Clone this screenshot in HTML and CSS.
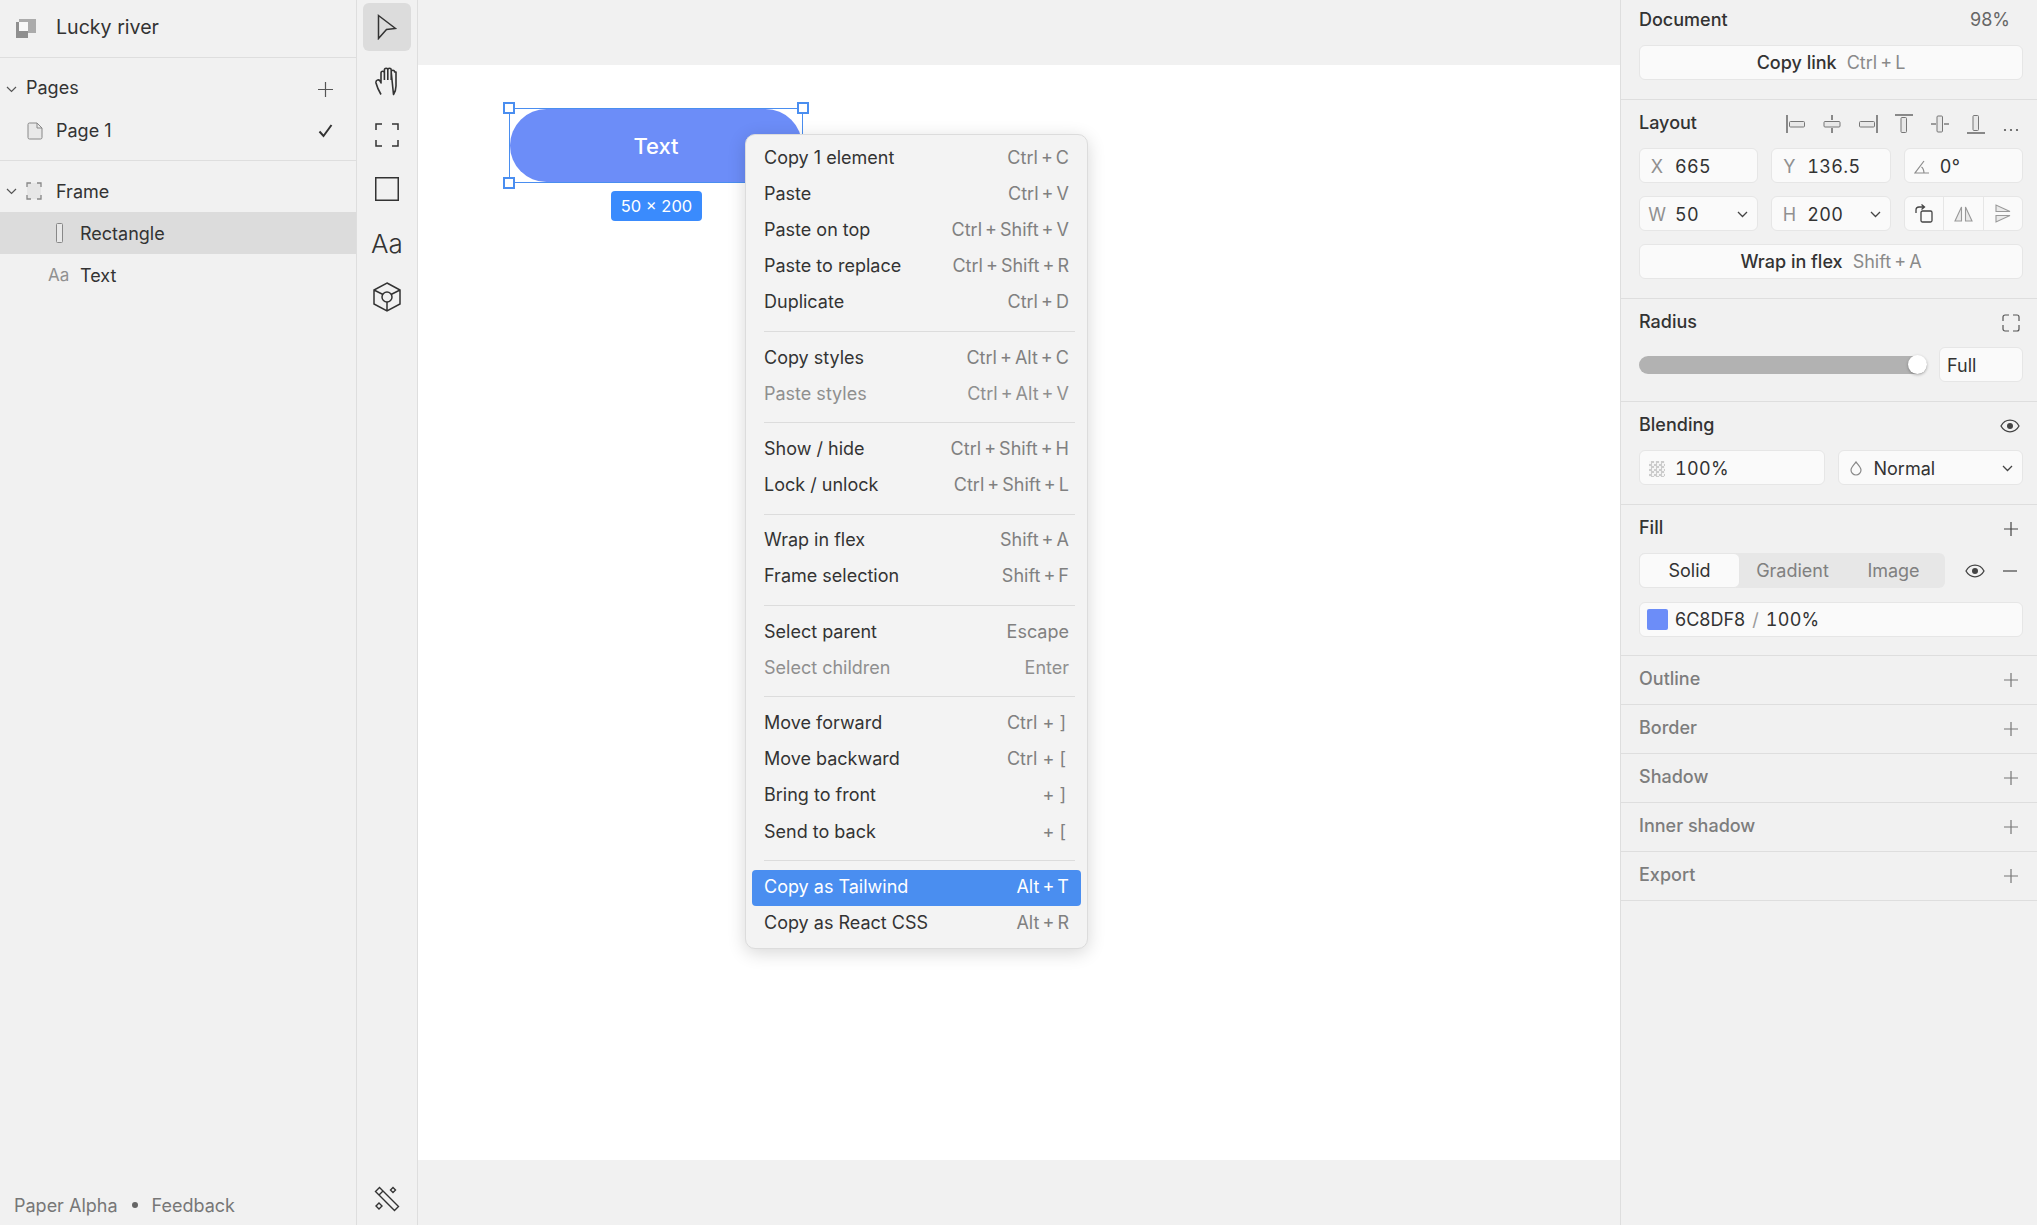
FILE: index.html
```html
<!DOCTYPE html>
<html lang="en">
<head>
<meta charset="UTF-8" />
<title>Paper - Lucky river</title>
<link rel="stylesheet" href="styles.css">
</head>
<body>
<div class="app">

  <!-- Left panel -->
  <aside class="left">
    <div class="doc-head">
      <svg class="doc-logo" width="20" height="20" viewBox="0 0 20 20"><rect x="0" y="3" width="12" height="16" fill="#8f8f8f"/><rect x="3" y="0" width="17" height="14" fill="#ababab"/><rect x="0" y="12" width="12" height="7" fill="#8f8f8f"/><rect x="3" y="3" width="9" height="9" fill="#f8f8f8"/></svg>
      <span>Lucky river</span>
    </div>
    <div class="tree-group">
      <div class="tree-row head">
        <svg class="chev" width="11" height="7" viewBox="0 0 11 7"><path d="M1 1l4.500 4.500L10 1" fill="none" stroke="#555" stroke-width="1.200"/></svg>
        <span class="grow">Pages</span>
        <svg width="15" height="15" viewBox="0 0 15 15"><path d="M7.500 0v15M0 7.500h15" stroke="#555" stroke-width="1.200"/></svg>
      </div>
      <div class="tree-row page">
        <svg width="16" height="18" viewBox="0 0 16 18"><path d="M1 2.500a1.500 1.500 0 0 1 1.500-1.500h7.500l5 5v9.500a1.500 1.500 0 0 1-1.500 1.500h-11a1.500 1.500 0 0 1-1.500-1.500z" fill="#e8e8e8" stroke="#888" stroke-width="1"/><path d="M10 1v5h5" fill="none" stroke="#888"/></svg>
        <span class="grow">Page 1</span>
        <svg width="15" height="14" viewBox="0 0 15 14"><path d="M1.500 7.500l4 4.500 8-11" fill="none" stroke="#333" stroke-width="2"/></svg>
      </div>
    </div>
    <div class="tree-layers">
      <div class="tree-row head">
        <svg class="chev" width="11" height="7" viewBox="0 0 11 7"><path d="M1 1l4.500 4.500L10 1" fill="none" stroke="#555" stroke-width="1.200"/></svg>
        <svg class="frame-ic" width="16" height="18" viewBox="0 0 16 18"><rect x="1" y="1" width="14" height="16" fill="#e6e6e6"/><path d="M1 5V1h4M11 1h4v4M15 13v4h-4M5 17H1v-4" fill="none" stroke="#888" stroke-width="1.300"/></svg>
        <span class="grow">Frame</span>
      </div>
      <div class="tree-row layer selected">
        <svg width="7" height="20" viewBox="0 0 7 20"><rect x=".5" y=".5" width="6" height="19" rx="1" fill="#e8e8e8" stroke="#888"/></svg>
        <span>Rectangle</span>
      </div>
      <div class="tree-row layer">
        <span class="aa">Aa</span>
        <span>Text</span>
      </div>
    </div>
    <div class="left-foot">
      <span>Paper Alpha</span>
      <i class="dot"></i>
      <span>Feedback</span>
    </div>
  </aside>

  <!-- Tools -->
  <nav class="tools">
    <div class="tool active"><svg width="20" height="26" viewBox="0 0 20 26"><path d="M1.500 1.500L18.500 14.500 9.500 15.500 1.500 24.500z" fill="none" stroke="#333" stroke-width="1.500"/></svg></div>
    <div class="tool"><svg width="24" height="29" viewBox="0 0 24 29"><path d="M6 27.500C4 24 2 20 1 16c-.5-3 2.500-4 4-2l1 2V6a1.700 1.700 0 0 1 3.400 0M9.400 13V3a1.700 1.700 0 0 1 3.400 0v10M12.800 3a1.700 1.700 0 0 1 3.400 0v10M16.200 5a1.700 1.700 0 0 1 3.400 0l1.400 0v14c0 3-1 6-2.500 8.500z" fill="none" stroke="#333" stroke-width="1.600" stroke-linejoin="round"/></svg></div>
    <div class="tool"><svg width="24" height="24" viewBox="0 0 24 24"><path d="M1 7V1h6M17 1h6v6M23 17v6h-6M7 23H1v-6" fill="none" stroke="#333" stroke-width="1.500"/></svg></div>
    <div class="tool"><svg width="24" height="24" viewBox="0 0 24 24"><rect x=".75" y=".75" width="22.500" height="22.500" fill="none" stroke="#333" stroke-width="1.500"/></svg></div>
    <div class="tool tool-aa">Aa</div>
    <div class="tool"><svg width="28" height="30" viewBox="0 0 28 30"><path d="M14 1L27 8v14l-13 7-13-7V8zM1 8l9 4.500M27 8l-9 4.500M14 20v9" fill="none" stroke="#333" stroke-width="1.500"/><circle cx="14" cy="15" r="5" fill="none" stroke="#333" stroke-width="1.500"/></svg></div>
    <div class="tool tool-bottom"><svg width="26" height="26" viewBox="0 0 26 26"><path d="M1.500 5.500L5.500 1.500 24.500 20.500 20.500 24.500zM5 9l4-4" fill="none" stroke="#333" stroke-width="1.400"/><path d="M19 1.500l2.500 2.500L19 6.500 16.500 4zM5 17l3 3-3 3-3-3z" fill="none" stroke="#333" stroke-width="1.400"/></svg></div>
  </nav>

  <!-- Canvas -->
  <main class="canvas">
    <div class="frame"></div>
    <div class="selection">
      <div class="shape">Text</div>
      <i class="handle tl"></i>
      <i class="handle tr"></i>
      <i class="handle bl"></i>
    </div>
    <div class="size-badge">50 × 200</div>

    <div class="menu">
      <div class="item"><span>Copy 1 element</span><kbd>Ctrl + C</kbd></div>
      <div class="item"><span>Paste</span><kbd>Ctrl + V</kbd></div>
      <div class="item"><span>Paste on top</span><kbd>Ctrl + Shift + V</kbd></div>
      <div class="item"><span>Paste to replace</span><kbd>Ctrl + Shift + R</kbd></div>
      <div class="item"><span>Duplicate</span><kbd>Ctrl + D</kbd></div>
      <hr>
      <div class="item"><span>Copy styles</span><kbd>Ctrl + Alt + C</kbd></div>
      <div class="item off"><span>Paste styles</span><kbd>Ctrl + Alt + V</kbd></div>
      <hr>
      <div class="item"><span>Show / hide</span><kbd>Ctrl + Shift + H</kbd></div>
      <div class="item"><span>Lock / unlock</span><kbd>Ctrl + Shift + L</kbd></div>
      <hr>
      <div class="item"><span>Wrap in flex</span><kbd>Shift + A</kbd></div>
      <div class="item"><span>Frame selection</span><kbd>Shift + F</kbd></div>
      <hr>
      <div class="item"><span>Select parent</span><kbd>Escape</kbd></div>
      <div class="item off"><span>Select children</span><kbd>Enter</kbd></div>
      <hr>
      <div class="item"><span>Move forward</span><kbd class="br">Ctrl + ]</kbd></div>
      <div class="item"><span>Move backward</span><kbd class="br">Ctrl + [</kbd></div>
      <div class="item"><span>Bring to front</span><kbd class="br">+ ]</kbd></div>
      <div class="item"><span>Send to back</span><kbd class="br">+ [</kbd></div>
      <hr>
      <div class="item active"><span>Copy as Tailwind</span><kbd>Alt + T</kbd></div>
      <div class="item"><span>Copy as React CSS</span><kbd>Alt + R</kbd></div>
    </div>
  </main>

  <!-- Right panel -->
  <aside class="right">
    <section class="section first">
      <div class="sec-title"><span>Document</span><span class="zoom">98%</span></div>
      <div class="btn"><b>Copy link</b><em>Ctrl + L</em></div>
    </section>

    <section class="section">
      <div class="sec-title">
        <span>Layout</span>
        <div class="aligns">
          <svg width="20" height="20" viewBox="0 0 20 20"><path d="M1 1v18" stroke="#444" stroke-width="1.200"/><rect x="3.500" y="7.500" width="15" height="5.500" rx="1" fill="#e8e8e8" stroke="#777"/></svg>
          <svg width="20" height="20" viewBox="0 0 20 20"><path d="M10 1v5M10 14v5" stroke="#444" stroke-width="1.200"/><rect x="2" y="7.500" width="16" height="5.500" rx="1" fill="#e8e8e8" stroke="#777"/></svg>
          <svg width="20" height="20" viewBox="0 0 20 20"><path d="M19 1v18" stroke="#444" stroke-width="1.200"/><rect x="1.500" y="7.500" width="15" height="5.500" rx="1" fill="#e8e8e8" stroke="#777"/></svg>
          <svg width="20" height="20" viewBox="0 0 20 20"><path d="M1 1h18" stroke="#444" stroke-width="1.200"/><rect x="7" y="3.500" width="5.500" height="15" rx="1" fill="#e8e8e8" stroke="#777"/></svg>
          <svg width="20" height="20" viewBox="0 0 20 20"><path d="M1 10h5M14 10h5" stroke="#444" stroke-width="1.200"/><rect x="7" y="2" width="5.500" height="16" rx="1" fill="#e8e8e8" stroke="#777"/></svg>
          <svg width="20" height="20" viewBox="0 0 20 20"><path d="M1 19h18" stroke="#444" stroke-width="1.200"/><rect x="7" y="1.500" width="5.500" height="15" rx="1" fill="#e8e8e8" stroke="#777"/></svg>
          <svg class="more" width="18" height="20" viewBox="0 0 18 20"><circle cx="3" cy="16" r="1.100" fill="#555"/><circle cx="9" cy="16" r="1.100" fill="#555"/><circle cx="15" cy="16" r="1.100" fill="#555"/></svg>
        </div>
      </div>
      <div class="grid3">
        <div class="field"><label>X</label><span class="num">665</span></div>
        <div class="field"><label>Y</label><span class="num">136.5</span></div>
        <div class="field">
          <label class="ic"><svg width="16" height="14" viewBox="0 0 16 14"><path d="M10 1L1 13h14M7.500 7c1.500 1 2.300 3 2.500 6" fill="none" stroke="#8c8c8c" stroke-width="1.200"/></svg></label>
          <span class="num">0°</span>
        </div>
      </div>
      <div class="grid3">
        <div class="field"><label>W</label><span class="num grow">50</span><svg class="caret" width="11" height="7" viewBox="0 0 11 7"><path d="M1 1l4.500 4.500L10 1" fill="none" stroke="#444" stroke-width="1.300"/></svg></div>
        <div class="field"><label>H</label><span class="num grow">200</span><svg class="caret" width="11" height="7" viewBox="0 0 11 7"><path d="M1 1l4.500 4.500L10 1" fill="none" stroke="#444" stroke-width="1.300"/></svg></div>
        <div class="field triple">
          <div><svg width="20" height="20" viewBox="0 0 20 20"><rect x="7" y="7" width="11" height="11" rx="1.500" fill="none" stroke="#444" stroke-width="1.300"/><path d="M2 9V6a3 3 0 0 1 3-3h5M7.500 .5L10.500 3 7.500 5.500" fill="none" stroke="#444" stroke-width="1.300"/></svg></div>
          <div><svg width="19" height="18" viewBox="0 0 19 18"><path d="M7.500 2v14H1zM11.500 2v14H18z" fill="#eaeaea" stroke="#999" stroke-width="1.100"/></svg></div>
          <div><svg width="18" height="19" viewBox="0 0 18 19"><path d="M2 1v6.500h14zM2 18v-6.500h14z" fill="#eaeaea" stroke="#999" stroke-width="1.100"/></svg></div>
        </div>
      </div>
      <div class="btn"><b>Wrap in flex</b><em>Shift + A</em></div>
    </section>

    <section class="section">
      <div class="sec-title">
        <span>Radius</span>
        <svg class="end-ic" width="18" height="18" viewBox="0 0 18 18"><path d="M1 7V3a2 2 0 0 1 2-2h4M11 1h4a2 2 0 0 1 2 2v4M17 11v4a2 2 0 0 1-2 2h-4M7 17H3a2 2 0 0 1-2-2v-4" fill="none" stroke="#555" stroke-width="1.200"/></svg>
      </div>
      <div class="radius-row">
        <div class="slider"><i class="knob"></i></div>
        <div class="field full"><span>Full</span></div>
      </div>
    </section>

    <section class="section">
      <div class="sec-title">
        <span>Blending</span>
        <svg class="end-ic eye" width="20" height="14" viewBox="0 0 20 14"><path d="M1 7c2-3.700 5-5.800 9-5.800s7 2.100 9 5.800c-2 3.700-5 5.800-9 5.800S3 10.700 1 7z" fill="none" stroke="#444" stroke-width="1.300"/><circle cx="10" cy="7" r="3" fill="#444"/></svg>
      </div>
      <div class="grid2">
        <div class="field"><i class="checker"></i><span class="num">100%</span></div>
        <div class="field">
          <label class="ic"><svg width="12" height="15" viewBox="0 0 12 15"><path d="M6 1c2.500 3 5 5.300 5 8a5 5 0 0 1-10 0c0-2.700 2.500-5 5-8z" fill="none" stroke="#888" stroke-width="1.200"/></svg></label>
          <span class="grow">Normal</span>
          <svg class="caret" width="11" height="7" viewBox="0 0 11 7"><path d="M1 1l4.500 4.500L10 1" fill="none" stroke="#444" stroke-width="1.300"/></svg>
        </div>
      </div>
    </section>

    <section class="section fill">
      <div class="sec-title">
        <span>Fill</span>
        <svg class="end-ic plus" width="14" height="14" viewBox="0 0 14 14"><path d="M7 0v14M0 7h14" stroke="#444" stroke-width="1.200"/></svg>
      </div>
      <div class="fill-row">
        <div class="tabs">
          <div class="tab on">Solid</div>
          <div class="tab">Gradient</div>
          <div class="tab">Image</div>
        </div>
        <svg class="eye" width="20" height="14" viewBox="0 0 20 14"><path d="M1 7c2-3.700 5-5.800 9-5.800s7 2.100 9 5.800c-2 3.700-5 5.800-9 5.800S3 10.700 1 7z" fill="none" stroke="#444" stroke-width="1.300"/><circle cx="10" cy="7" r="3" fill="#444"/></svg>
        <svg class="minus" width="14" height="2" viewBox="0 0 14 2"><path d="M0 1h14" stroke="#444" stroke-width="1.200"/></svg>
      </div>
      <div class="field color"><i class="swatch"></i><span>6C8DF8</span><u>/</u><span class="num">100%</span></div>
    </section>

    <div class="collapsed"><span>Outline</span><svg width="14" height="14" viewBox="0 0 14 14"><path d="M7 0v14M0 7h14" stroke="#777" stroke-width="1.200"/></svg></div>
    <div class="collapsed"><span>Border</span><svg width="14" height="14" viewBox="0 0 14 14"><path d="M7 0v14M0 7h14" stroke="#777" stroke-width="1.200"/></svg></div>
    <div class="collapsed"><span>Shadow</span><svg width="14" height="14" viewBox="0 0 14 14"><path d="M7 0v14M0 7h14" stroke="#777" stroke-width="1.200"/></svg></div>
    <div class="collapsed"><span>Inner shadow</span><svg width="14" height="14" viewBox="0 0 14 14"><path d="M7 0v14M0 7h14" stroke="#777" stroke-width="1.200"/></svg></div>
    <div class="collapsed"><span>Export</span><svg width="14" height="14" viewBox="0 0 14 14"><path d="M7 0v14M0 7h14" stroke="#777" stroke-width="1.200"/></svg></div>
  </aside>
</div>
</body>
</html>
```

FILE: styles.css
```css
:root {
  --panel: #f1f1f1;
  --line: #dedede;
  --text: #333;
  --muted: #868686;
  --blue: #4a8ef0;
}
* {
  box-sizing: border-box;
}
html, body {
  margin: 0;
  height: 100%;
  overflow: hidden;
}
body {
  font-family: Inter, "Liberation Sans", sans-serif;
  font-size: 18px;
  color: var(--text);
  background: var(--panel);
}
svg {
  display: block;
  flex: none;
}
.grow {
  flex: 1;
}
.app {
  display: flex;
  height: 1225px;
}

/* left panel */
.left {
  width: 357px;
  border-right: 1px solid var(--line);
  display: flex;
  flex-direction: column;
}
.doc-head {
  height: 58px;
  padding: 0 0 0 16px;
  display: flex;
  align-items: center;
  gap: 20px;
  font-size: 19.600px;
  border-bottom: 1px solid var(--line);
}
.doc-head span {
  margin-top: -3px;
}
.tree-group {
  height: 103px;
  padding-top: 10px;
  border-bottom: 1px solid var(--line);
}
.tree-row {
  display: flex;
  align-items: center;
  height: 42px;
}
.tree-row > span {
  margin-top: -2px;
}
.tree-group .head > span {
  margin-top: -4px;
}
.tree-layers .tree-row > span {
  margin-top: 0;
}
.tree-row.head {
  padding: 0 23px 0 6px;
}
.tree-row.head .chev {
  margin-right: 9px;
}
.tree-row.page {
  padding: 0 23px 0 27px;
  gap: 13px;
}
.tree-layers {
  padding-top: 9px;
  flex: 1;
}
.frame-ic {
  margin-right: 14px;
}
.tree-row.layer {
  padding-left: 56px;
  gap: 17px;
}
.tree-row.selected {
  background: #dcdcdc;
}
.tree-layers .aa {
  width: 22px;
  margin-left: -8px;
  margin-right: -7px;
  color: #909090;
  font-size: 17px;
}
.left-foot {
  height: 40px;
  padding: 0 0 0 14px;
  display: flex;
  align-items: center;
  gap: 14px;
  color: #777;
}
.dot {
  width: 6px;
  height: 6px;
  border-radius: 50%;
  background: #666;
}

/* tools */
.tools {
  width: 61px;
  border-right: 1px solid var(--line);
  padding: 3px 5px 0;
  display: flex;
  flex-direction: column;
  align-items: center;
  gap: 6px;
}
.tool {
  width: 48px;
  height: 48px;
  flex: none;
  display: flex;
  align-items: center;
  justify-content: center;
  border-radius: 6px;
}
.tool.active {
  background: #dcdcdc;
}
.tool-aa {
  font-size: 26px;
  font-weight: 300;
}
.tool-bottom {
  margin-top: auto;
  margin-bottom: 2px;
}

/* canvas */
.canvas {
  flex: 1;
  position: relative;
  padding-top: 65px;
}
.frame {
  height: 1095px;
  background: #fff;
}
.selection {
  position: absolute;
  left: 91px;
  top: 108px;
  width: 294px;
  height: 75px;
  border: 1.500px solid var(--blue);
}
.shape {
  height: 100%;
  border-radius: 37px;
  background: #6c8df8;
  color: #fff;
  font-size: 22px;
  font-weight: 500;
  display: flex;
  align-items: center;
  justify-content: center;
}
.handle {
  position: absolute;
  width: 12px;
  height: 12px;
  background: #fff;
  border: 2px solid var(--blue);
}
.tl { left: -7px; top: -7px; }
.tr { right: -7px; top: -7px; }
.bl { left: -7px; bottom: -7px; }
.size-badge {
  position: absolute;
  left: 193px;
  top: 191px;
  width: 91px;
  height: 30px;
  border-radius: 4px;
  background: #3a8bfd;
  color: #fff;
  font-size: 16.500px;
  display: flex;
  align-items: center;
  justify-content: center;
}

/* context menu */
.menu {
  position: absolute;
  left: 327px;
  top: 134px;
  width: 343px;
  height: 815px;
  padding: 6px 6px;
  background: #f3f3f3;
  border: 1px solid #dcdcdc;
  border-radius: 10px;
  box-shadow: 0 4px 18px rgba(0,0,0,0.16);
}
.item {
  height: 36.200px;
  padding: 0 12px 4px 12px;
  display: flex;
  justify-content: space-between;
  align-items: center;
  border-radius: 4px;
}
.item kbd {
  font: inherit;
  color: #808080;
  word-spacing: -2px;
}
.item kbd.br {
  word-spacing: 0;
  margin-right: 3px;
}
.item.off, .item.off kbd {
  color: #8f8f8f;
}
.item.active {
  background: var(--blue);
  color: #fff;
}
.item.active kbd {
  color: #fff;
}
.menu hr {
  margin: 9px 6px 9px 12px;
  height: 1px;
  border: 0;
  background: #dcdcdc;
}

/* right panel */
.right {
  width: 417px;
  border-left: 1px solid var(--line);
  flex: none;
}
.section {
  padding: 13px 14px 19px 18px;
  border-bottom: 1px solid var(--line);
}
.section.first {
  padding-top: 9px;
}
.section.fill {
  padding-bottom: 18px;
}
.sec-title {
  height: 22px;
  margin-bottom: 13px;
  display: flex;
  justify-content: space-between;
  align-items: center;
  font-weight: 500;
}
.sec-title > span {
  margin-top: -3px;
}
.section.first .sec-title {
  margin-bottom: 14px;
}
.section.first .sec-title > span {
  margin-top: -1px;
}
.zoom {
  font-weight: 400;
  color: #666;
  margin-right: 13px;
}
.btn {
  height: 35px;
  border: 1px solid #e6e6e6;
  border-radius: 6px;
  background: #fafafa;
  display: flex;
  align-items: center;
  justify-content: center;
  gap: 10px;
}
.btn b {
  font-weight: 500;
}
.btn em {
  font-style: normal;
  color: #8a8a8a;
  word-spacing: -2px;
}
.aligns {
  display: flex;
  align-items: center;
  gap: 16px;
  margin-right: 4px;
}
.aligns .more {
  margin-right: -1px;
}
.grid3 {
  display: grid;
  grid-template-columns: repeat(3, 1fr);
  gap: 13px;
  margin-bottom: 13px;
}
.grid2 {
  display: grid;
  grid-template-columns: 1fr 1fr;
  gap: 13px;
}
.field {
  height: 35px;
  border: 1px solid #e6e6e6;
  border-radius: 6px;
  background: #fafafa;
  display: flex;
  align-items: center;
  padding: 2px 9px 0 7px;
}
.field label {
  width: 20px;
  flex: none;
  color: #909090;
  margin-right: 8px;
  display: flex;
  justify-content: center;
}
.num {
  font-variant-numeric: tabular-nums;
  letter-spacing: .3px;
}
.caret {
  margin-left: 4px;
}
.triple {
  padding: 0;
}
.triple div {
  flex: 1;
  height: 100%;
  display: flex;
  align-items: center;
  justify-content: center;
  border-left: 1px solid #e6e6e6;
}
.triple div:first-child {
  border-left: 0;
}
.end-ic {
  margin-right: 3px;
}
.end-ic.eye {
  margin-right: 3px;
}
.end-ic.plus {
  margin-right: 5px;
}
.radius-row {
  display: flex;
  align-items: center;
  gap: 12px;
}
.slider {
  position: relative;
  flex: 1;
  height: 18px;
  border-radius: 9px;
  background: #b2b2b2;
}
.knob {
  position: absolute;
  right: 0;
  top: -0.500px;
  width: 19px;
  height: 19px;
  border-radius: 50%;
  background: #fff;
  box-shadow: 0 1px 3px rgba(0,0,0,0.3);
}
.field.full {
  width: 84px;
  flex: none;
}
.checker {
  width: 16px;
  height: 16px;
  margin: 0 10px 0 2px;
  background: conic-gradient(#ccc 25%, #f5f5f5 0 50%, #ccc 0 75%, #f5f5f5 0) 0 0 / 5px 5px;
}
.fill-row {
  display: flex;
  align-items: center;
  margin-bottom: 14px;
}
.tabs {
  width: 306px;
  height: 35px;
  border-radius: 6px;
  background: #e7e7e7;
  display: flex;
  color: #808080;
}
.tab {
  width: 101px;
  padding-left: 4px;
  display: flex;
  align-items: center;
  justify-content: center;
}
.tab.on {
  padding-left: 0;
  background: #fafafa;
  color: var(--text);
  border: 1px solid #e6e6e6;
  border-radius: 6px;
}
.fill-row .eye {
  margin-left: 20px;
}
.fill-row .minus {
  margin-left: 18px;
}
.color {
  padding: 0 9px 0 7px;
}
.swatch {
  width: 21px;
  height: 21px;
  border-radius: 2px;
  background: #6c8df8;
  margin-right: 7px;
}
.color u {
  text-decoration: none;
  color: #999;
  margin: 0 7px;
}
.collapsed {
  height: 49px;
  padding: 0 19px 0 18px;
  border-bottom: 1px solid var(--line);
  display: flex;
  justify-content: space-between;
  align-items: center;
  color: #7d7d7d;
  font-weight: 500;
}
.collapsed span {
  margin-top: -3px;
}
```
